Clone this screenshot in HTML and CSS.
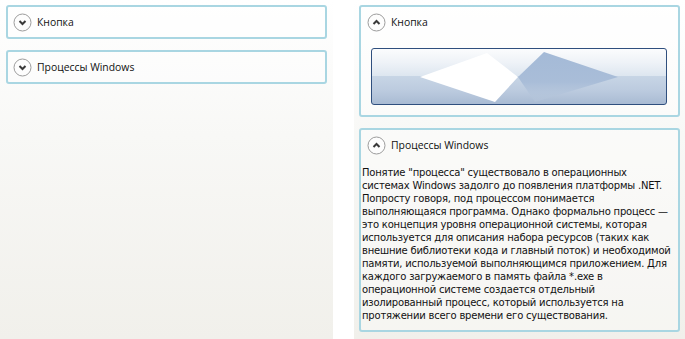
FILE: index.html
```html
<!DOCTYPE html>
<html lang="ru">
<head>
    <meta charset="UTF-8">
    <title>Expander</title>
    <link rel="stylesheet" href="styles.css">
</head>
<body>
    <div class="screen">
        <div class="window window-left">
            <div class="expander">
                <div class="expander-header">
                    <svg class="toggle" width="19" height="19" viewBox="0 0 19 19">
                        <circle cx="9.5" cy="9.5" r="8.5" fill="#fdfdfd" stroke="#9c9c9c"/>
                        <path d="M6.5 8 L9.5 11 L12.5 8" fill="none" stroke="#3a3a3a" stroke-width="2"/>
                    </svg>
                    <span>Кнопка</span>
                </div>
            </div>
            <div class="expander">
                <div class="expander-header">
                    <svg class="toggle" width="19" height="19" viewBox="0 0 19 19">
                        <circle cx="9.5" cy="9.5" r="8.5" fill="#fdfdfd" stroke="#9c9c9c"/>
                        <path d="M6.5 8 L9.5 11 L12.5 8" fill="none" stroke="#3a3a3a" stroke-width="2"/>
                    </svg>
                    <span>Процессы Windows</span>
                </div>
            </div>
        </div>

        <div class="window window-right">
            <div class="expander">
                <div class="expander-header">
                    <svg class="toggle" width="19" height="19" viewBox="0 0 19 19">
                        <circle cx="9.5" cy="9.5" r="8.5" fill="#fdfdfd" stroke="#9c9c9c"/>
                        <path d="M6.5 11 L9.5 8 L12.5 11" fill="none" stroke="#3a3a3a" stroke-width="2"/>
                    </svg>
                    <span>Кнопка</span>
                </div>
                <div class="expander-content button-content">
                    <button class="glass-button">
                        <svg width="294" height="55" viewBox="0 0 294 55">
                            <defs>
                                <linearGradient id="blueFade" x1="0" y1="0" x2="0" y2="1">
                                    <stop offset="0" stop-color="#a4bad7"/>
                                    <stop offset="0.6" stop-color="#a9bdd8"/>
                                    <stop offset="1" stop-color="#b8c8dc" stop-opacity="0.4"/>
                                </linearGradient>
                            </defs>
                            <polygon points="146,28 172,3 246,28 163,53" fill="url(#blueFade)"/>
                            <polygon points="48,28 115,4 146,28 123,53" fill="#ffffff"/>
                        </svg>
                    </button>
                </div>
            </div>
            <div class="expander">
                <div class="expander-header">
                    <svg class="toggle" width="19" height="19" viewBox="0 0 19 19">
                        <circle cx="9.5" cy="9.5" r="8.5" fill="#fdfdfd" stroke="#9c9c9c"/>
                        <path d="M6.5 11 L9.5 8 L12.5 11" fill="none" stroke="#3a3a3a" stroke-width="2"/>
                    </svg>
                    <span>Процессы Windows</span>
                </div>
                <div class="expander-content text-content">
                    <p class="description">Понятие "процесса" существовало в операционных<br>
                    системах Windows задолго до появления платформы .NET.<br>
                    Попросту говоря, под процессом понимается<br>
                    выполняющаяся программа. Однако формально процесс —<br>
                    это концепция уровня операционной системы, которая<br>
                    используется для описания набора ресурсов (таких как<br>
                    внешние библиотеки кода и главный поток) и необходимой<br>
                    памяти, используемой выполняющимся приложением. Для<br>
                    каждого загружаемого в память файла *.exe в<br>
                    операционной системе создается отдельный<br>
                    изолированный процесс, который используется на<br>
                    протяжении всего времени его существования.</p>
                </div>
            </div>
        </div>
    </div>
</body>
</html>
```

FILE: styles.css
```css
html, body {
    margin: 0;
    padding: 0;
    background: #ffffff;
}
.screen {
    display: flex;
    justify-content: space-between;
    width: 685px;
    height: 339px;
}
.window {
    display: flex;
    flex-direction: column;
    gap: 11px;
    box-sizing: border-box;
    height: 339px;
    background: linear-gradient(to bottom, #ffffff 0%, #f8f8f6 40%, #f1f0eb 100%);
}
.window-left {
    width: 333px;
    padding: 5px 6px;
}
.window-right {
    width: 331px;
    padding: 5px 5px;
}
.expander {
    border: 2px solid #a9d6e2;
    border-radius: 3px;
    background: rgba(255, 255, 255, 0.35);
}
.expander-header {
    display: flex;
    align-items: center;
    gap: 5px;
    height: 30px;
    padding-left: 5px;
    font-family: "Open Sans", "Liberation Sans", sans-serif;
    font-size: 10.4px;
    color: #111;
}
.window-right .expander-header {
    padding-left: 6px;
}
.toggle {
    display: block;
    flex: none;
}
.button-content {
    padding: 11px 10px 10px 10px;
}
.text-content {
    padding: 6px 4px 8px 1px;
}
.glass-button {
    display: block;
    width: 296px;
    height: 57px;
    padding: 0;
    margin: 0;
    border: 1px solid #2f4f7e;
    border-radius: 3px;
    background: linear-gradient(to bottom,
        #fbfcfd 0%, #eef2f7 25%, #dde6f0 49%,
        #c7d5e5 50%, #bccbdf 75%, #a9bbd3 100%);
}
.glass-button svg {
    display: block;
}
.description {
    margin: 0;
    padding: 0;
    font-family: "DejaVu Sans", sans-serif;
    font-size: 10px;
    letter-spacing: -0.2px;
    line-height: 13px;
    color: #111;
    white-space: nowrap;
}
```
